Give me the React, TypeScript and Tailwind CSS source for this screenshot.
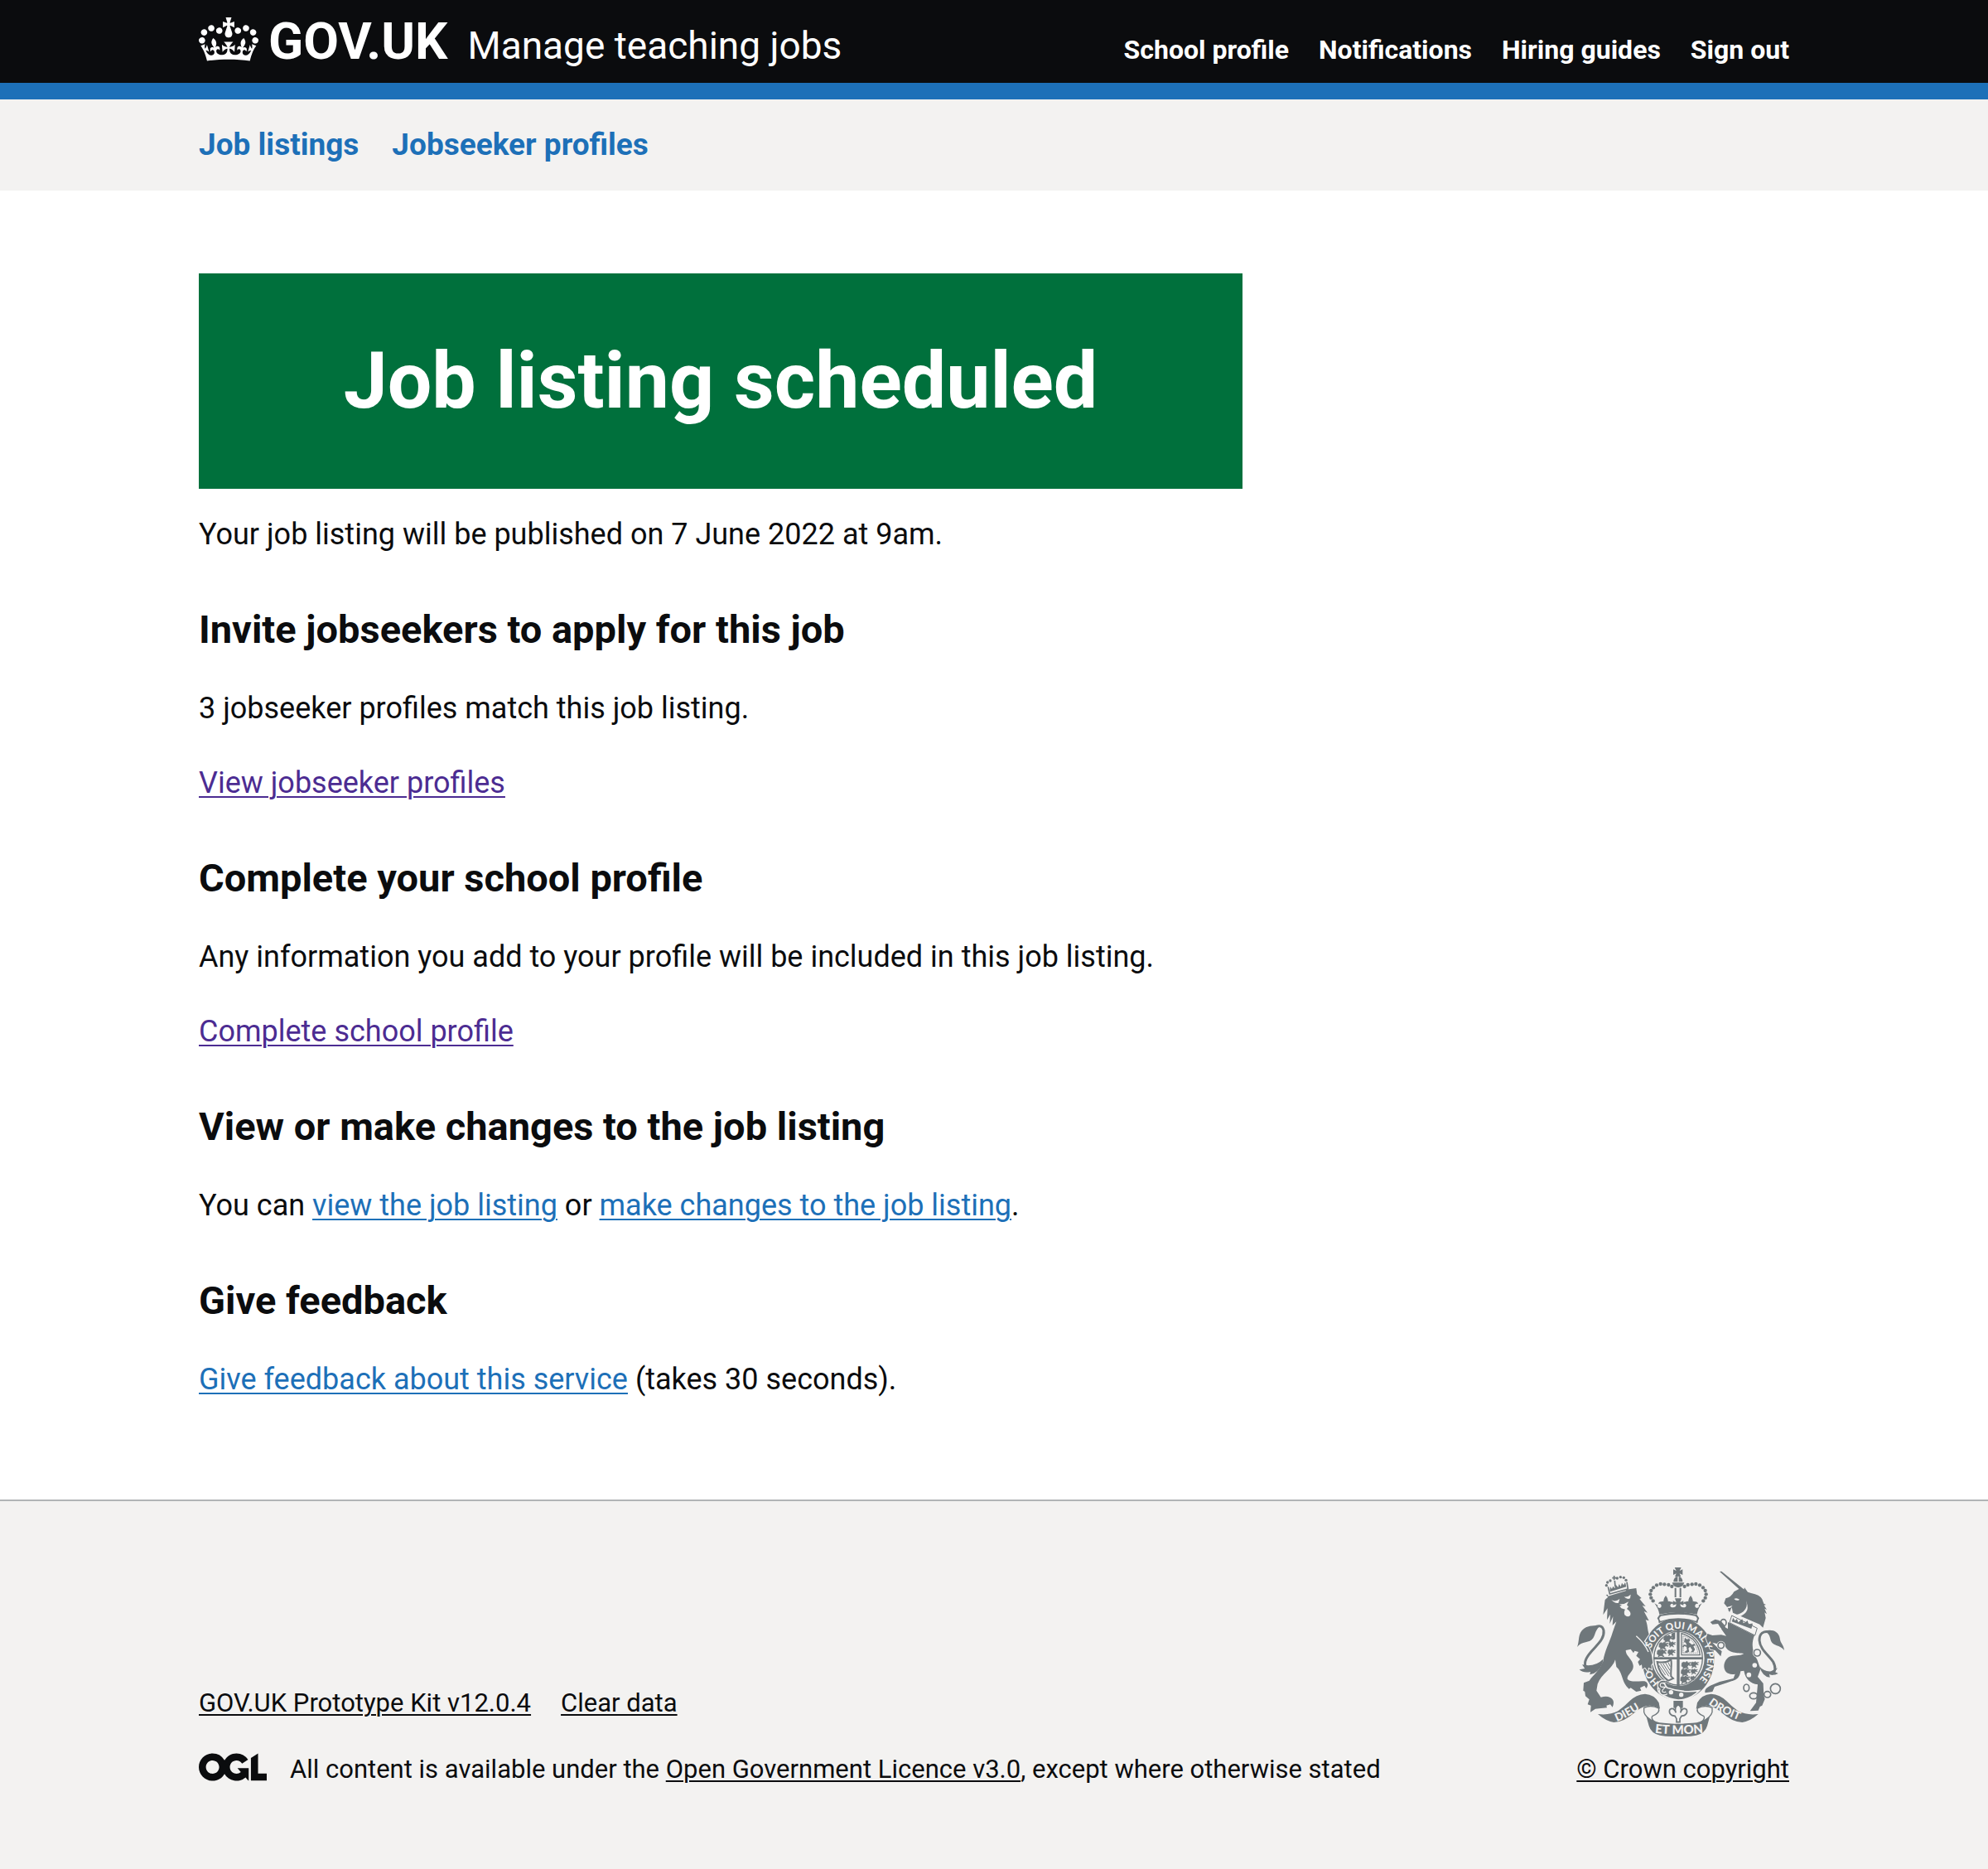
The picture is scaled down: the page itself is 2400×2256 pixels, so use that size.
import type { ReactNode } from "react";

const PAPER = "#f3f2f1";
const INK = "#6f777b";

function Crown() {
  return (
    <svg aria-hidden="true" viewBox="0 0 132 97" className="mt-px h-[53px] w-[72px] shrink-0 self-start" fill="currentColor">
      <path
        fillRule="evenodd"
        d="M25 30.2c3.5 1.5 7.7-.2 9.1-3.7 1.5-3.6-.2-7.8-3.9-9.2-3.6-1.4-7.6.3-9.1 3.9-1.4 3.5.3 7.5 3.9 9zM9 39.5c3.6 1.5 7.8-.2 9.2-3.7 1.5-3.6-.2-7.8-3.9-9.1-3.6-1.5-7.6.2-9.1 3.8-1.4 3.5.3 7.5 3.8 9zM4.4 57.2c3.5 1.5 7.7-.2 9.1-3.8 1.5-3.6-.2-7.7-3.9-9.1-3.5-1.5-7.6.3-9.1 3.8-1.4 3.5.3 7.6 3.9 9.1zm38.3-21.4c3.5 1.5 7.7-.2 9.1-3.8 1.5-3.6-.2-7.7-3.9-9.1-3.6-1.5-7.6.3-9.1 3.8-1.3 3.6.4 7.7 3.9 9.1zm64.4-5.6c-3.6 1.5-7.8-.2-9.1-3.7-1.5-3.6.2-7.8 3.8-9.2 3.6-1.4 7.7.3 9.2 3.9 1.3 3.5-.4 7.5-3.9 9zm15.9 9.3c-3.6 1.5-7.7-.2-9.1-3.7-1.5-3.6.2-7.8 3.7-9.1 3.6-1.5 7.7.2 9.2 3.8 1.5 3.5-.3 7.5-3.8 9zm4.7 17.7c-3.6 1.5-7.8-.2-9.2-3.8-1.5-3.6.2-7.7 3.9-9.1 3.6-1.5 7.7.3 9.2 3.8 1.3 3.5-.4 7.6-3.9 9.1zM89.3 35.8c-3.6 1.5-7.8-.2-9.2-3.8-1.4-3.6.2-7.7 3.9-9.1 3.6-1.5 7.7.3 9.2 3.8 1.4 3.6-.3 7.7-3.9 9.1zM69.7 17.7l8.9 4.7V9.3l-8.9 2.8c-.2-.3-.5-.6-.9-.9L72.4 0H59.6l3.5 11.2c-.3.3-.6.5-.9.9l-8.8-2.8v13.1l8.8-4.7c.3.3.6.7.9.9l-5 15.4v.1c-.2.8-.4 1.6-.4 2.4 0 4.1 3.1 7.5 7 8.1h.2c.3 0 .7.1 1 .1.4 0 .7 0 1-.1h.2c4-.6 7.1-4.1 7.1-8.1 0-.8-.1-1.7-.4-2.4V34l-5.1-15.4c.4-.2.7-.6 1-.9zM66 92.8c16.9 0 32.8 1.1 47.1 3.2 4-16.9 8.9-26.7 14-33.5l-9.6-3.4c1 4.9 1.1 7.2 0 10.2-1.5-1.4-3-4.3-4.2-8.7L108.6 76c2.8-2 5-3.2 7.5-3.3-4.4 9.4-10 11.9-13.6 11.2-4.3-.8-6.3-4.6-5.6-7.9 1-4.7 5.7-5.9 8-.5 4.3-8.7-3-11.4-7.6-8.8 7.1-7.2 7.9-13.5 2.1-21.1-8 6.1-8.1 12.3-4.5 20.8-4.7-5.4-12.1-2.5-9.5 6.2 3.4-5.2 7.9-2 7.2 3.1-.6 4.3-6.4 7.8-13.5 7.2-10.3-.9-10.9-8-11.2-13.8 2.5-.5 7.1 1.8 11 7.3L80.2 60c-4.1 4.4-8 5.3-12.3 5.4 1.4-4.4 8-11.6 8-11.6H55.5s6.4 7.2 7.9 11.6c-4.2-.1-8-1-12.3-5.4l1.4 16.4c3.9-5.5 8.5-7.7 10.9-7.3-.3 5.8-.9 12.8-11.1 13.8-7.2.6-12.9-2.9-13.5-7.2-.7-5 3.8-8.3 7.1-3.1 2.7-8.7-4.6-11.6-9.4-6.2 3.7-8.5 3.6-14.7-4.6-20.8-5.8 7.6-5 13.9 2.2 21.1-4.7-2.6-11.9.1-7.7 8.8 2.3-5.5 7.1-4.2 8.1.5.7 3.3-1.3 7.1-5.7 7.9-3.5.7-9-1.8-13.5-11.2 2.5.1 4.7 1.3 7.5 3.3l-4.7-15.4c-1.2 4.4-2.7 7.2-4.3 8.7-1.1-3-.9-5.3 0-10.2l-9.5 3.4c5 6.9 9.9 16.7 14 33.5 14.8-2.1 30.8-3.2 47.7-3.2z"
      />
    </svg>
  );
}

function OglLogo() {
  return (
    <svg aria-hidden="true" viewBox="0 0 483.2 195.7" className="h-[34px] w-[82px] shrink-0" fill="currentColor">
      <path d="M421.5 142.8V.1l-50.7 32.3v161.1h112.4v-50.7zm-122.3-9.6A47.12 47.12 0 0 1 221 97.8c0-26 21.1-47.1 47.1-47.1 16.7 0 31.4 8.7 39.7 21.8l42.7-27.2A97.63 97.63 0 0 0 268.1 0c-36.5 0-68.3 20.1-85.1 49.7A98 98 0 0 0 97.8 0C43.9 0 0 43.9 0 97.8s43.9 97.8 97.8 97.8c36.5 0 68.3-20.1 85.1-49.7a97.76 97.76 0 0 0 149.6 25.4l19.4 22.2h3v-87.8h-80l24.3 27.5zM97.8 145c-26 0-47.1-21.1-47.1-47.1s21.1-47.1 47.1-47.1 47.1 21.1 47.1 47.1S123.8 145 97.8 145" />
    </svg>
  );
}

const leftBeads = [[388, 127], [374, 126], [360, 130], [348, 139], [340, 150], [337, 163], [340, 176], [347, 187], [403, 129], [415, 135]];
const lionBeads = [[178, 131], [182, 120], [192, 114], [217, 105], [229, 101], [241, 103], [249, 112]];
const links = [[602, 266, 10, 12], [724, 375, 12, 12], [685, 502, 10, 13], [711, 531, 14, 11], [761, 526, 12, 11], [790, 505, 18, 18]];
const passant = "M0 4q6-8 14-3l6-5 4 6 10-2 3 4-8 3 6 4-2 5-8-3-3 5 5 6-3 4-7-5-7 1-3 5-5-1 3-8-6-4z";
const passants = [[385, 312, 1], [368, 338, 1], [404, 336, 0.7], [361, 364, 1], [400, 364, 0.8], [450, 408, 1], [484, 408, 0.8], [448, 434, 1], [484, 434, 0.7], [446, 460, 1], [482, 460, 0.6]];

function RoyalArms() {
  return (
    <svg aria-hidden="true" viewBox="72 66 750 612" className="mr-1.5 h-[204px] w-[250px]" fill={INK}>
      {/* garter ring */}
      <ellipse cx="438" cy="397" rx="131" ry="149" />
      <ellipse cx="438" cy="395" rx="95" ry="100" fill={PAPER} />
      <ellipse cx="438" cy="395" rx="88" ry="97" fill="none" stroke={INK} strokeWidth="4" />
      <path d="M433 292h10v208h-10zM350 391h177v8H350z" />
      {passants.map(([x, y, s]) => (
        <path key={`${x}-${y}`} d={passant} transform={`translate(${x} ${y}) scale(${s})`} stroke={PAPER} strokeWidth="1" />
      ))}
      <path d="M413 305l14-4v24l-9 4z" />
      <path d="M450 383V305q20 6 40 20 24 24 27 58z" fill="none" stroke={INK} strokeWidth="4" />
      <path d="M456 376V314q16 4 30 16 20 20 23 46z" fill="none" stroke={INK} strokeWidth="2" strokeDasharray="5 2" />
      <path d="M462 320l8 6 8-2 3 8-5 4 12 10 8-4 4 6-7 3 6 12-6 10h-10l6-8-8-12-6 6 3 12-10 4-8-2 10-8-2-12-8-2-4 6-3-6 8-6 8 3-4-10-6-1z" />
      <path d="M362 408c20 4 38 0 50-8 4 18-2 40 0 60l8 8-18 8c-20-12-36-38-40-68z" fill="none" stroke={INK} strokeWidth="6" />
      <path d="M374 414l30 46M383 414l24 38M392 411l16 28M401 409l8 16M368 420l24 36" stroke={INK} strokeWidth="3" />
      {/* buckle and strap */}
      <path d="M372 484q16-4 20 10l6 8q58 20 116 10-32 34-76 34-36-2-66-24-16-16 0-38z" stroke={PAPER} strokeWidth="5" />
      <path d="M392 480q-24-4-24 14 2 10 12 10-8 8-2 16 8 6 18 0" fill="none" stroke={PAPER} strokeWidth="13" />
      <path d="M392 480q-24-4-24 14 2 10 12 10-8 8-2 16 8 6 18 0" fill="none" stroke={INK} strokeWidth="6" />
      <circle cx="412" cy="518" r="8" fill={PAPER} />
      <circle cx="449" cy="527" r="8" fill={PAPER} />
      {/* imperial crown */}
      <path d="M425 66h24l-6 12 11-5v20l-11-5 5 12h-22l5-12-11 5V73l11 5z" />
      <path d="M421 118q0-18 17-20 16 2 16 20zM416 121h44q-4 16-22 18-18-2-22-18z" />
      <path d="M436 98h4v20h-4z" fill={PAPER} />
      <path d="M425 140h6v34h-6zM443 140h6v34h-6z" />
      {leftBeads.map(([x, y]) => (
        <g key={`${x}-${y}`}>
          <circle cx={x} cy={y} r="6.5" />
          <circle cx={876 - x} cy={y} r="6.5" />
        </g>
      ))}
      <path d="M352 196l12 7q-4 8 6 10 10-2 6-12-4-6-10-3 2-10 13-8 2-4 6 0-2-10 8-22 10 12 8 22 4-4 8 0 12 0 10 8-8-2-10 5 0 8 10 8 12 0 12-12l-12 4v-16l12 5-5-14h24l-5 14 12-5v16l-12-4q0 12 12 12 10 0 10-8-2-7-10-5-2-8 10-8 4-4 8 0-2-10 8-22 10 12 8 22 4-4 6 0 11-2 13 8-6-3-10 3-4 10 6 12 10-2 6-10l12-7q-14 18-18 40-64-14-136 0-4-22-18-40z" />
      <path d="M370 238q68-22 136 0l8 12q-6 10-6 18-70-32-140 0 0-10-6-18z" />
      <path d="M376 242q62-12 124 0 12 8 2 18-64-20-128 0-10-10 2-18z" fill={PAPER} />
      {/* lion */}
      <path
        d="M173 183l11-10-8-8 24-2 50-17 36-5 3 22 16 14-7 3 22 27-12-3 19 26-13-5 18 34-12-3c8 18 6 34 12 52l-18 26q20 18 28 50l4 28-6 8 2 14-12-6-2 14-10-14-10 6-2-16-8 4-6-14 8-10-14-12 8-14-14-4-4 8-10-14-18 4c0 20 20 28 26 50 8 26-22 36-20 54 12 14 40 6 62 8 14 4 14 18 6 26l-6-10-16 8 4 10-18 4-20-14-6 4c-24-20-22-48-38-72l-8-8-4-26c-10 34-50 50-64 88l-4 24 16 24q30-8 42 8 8 10 0 28l-8-10-14 4 2 8-22 2-20 2-18 12 2-24-12-4 6-18-14-12-2-16-6-4 2-28 20-8c14-20 40-40 50-70 6-40 24-70 34-104l14-40-14 14 2-32-12 26 2-34-12 20 2-42-16 24 6-48z"
        stroke={PAPER}
        strokeWidth="6"
        paintOrder="stroke"
      />
      <path d="M182 160l70-19-4 10-64 19z" fill={PAPER} />
      <path d="M196 184q16 8 30-4l-4 14q-12 4-26-10zM242 172q14 2 24-8l-2 14q-12 6-22-6z" fill={PAPER} />
      <path d="M224 198q16 4 34-8l-6 12 6 6-6 8q18 12 12 24-10 8-20-2-4-12 2-20l-14-4-6-8 8-2z" fill={PAPER} />
      <path d="M286 314q30 26 44 58" fill="none" stroke={PAPER} strokeWidth="4" />
      <path d="M184 136l6 26 66-18-4-25M206 96v16M199 104h15M208 114l2 22" fill="none" stroke={INK} strokeWidth="5" />
      <path d="M190 150l2-14 6 8 4-10 6 8 4-14 8 10 4-12 6 10 4-14 6 8 6-10 4 16-58 18z" />
      {lionBeads.map(([x, y]) => <circle key={x} cx={x} cy={y} r="5" />)}
      <path d="M132 284q30-16 36 10c4 30-22 50-44 76-26 30-28 44-18 66" fill="none" stroke={INK} strokeWidth="9" />
      <path d="M152 280c-24-8-56 0-68 22-8 16-4 32-12 52 16-22 46-12 58-32 8-12 6-24 22-42zM166 398q-30 30-76 20l10 14-20 4q16 14 40 8l-2 10q30-4 46-40z" />
      {/* unicorn */}
      <path d="M588 81l7-1 82 66-4 10 5-17 12 16 12 4q32 6 40 22l6 16 8 4-7 2 10 16-8-4 8 20-8-6 4 20-10 35-12-12-97-42-4-20-8 18-6-10-4-10-10-12 6-18q20-4 30-24l18-10z" />
      <path d="M640 180q10-6 20 2-8 8-20-2zM603 214l18-6 14-4-8 8-10 2 4 6zM684 186q8 24-10 40-18 14-40 12l20 8q28-8 34-26 4-12-4-34z" fill={PAPER} />
      <path
        d="M618 264l96 48c-12 30-8 60 10 88l12 34-10 28 20 24 2 44 4 12-10 24-8 4-6 14-30 2 22-30 6-66c-26-4-44-18-50-50l-12 2c-6 36-26 32-50 42l-44 14-8 18-26 4q-6-14 18-26l34-14 50-12 6-16c-50 8-48-46-22-62 14-8 40-2 54-12-24-4-56 0-68-28l-14-4-32-8 12 12 22 20-4 18-20-22-18-4-16-40 6-16 18 6 32-2 18 4-16-22-14-22-20 2-8-8 18-10q26 2 38 30l8 4z"
        stroke={PAPER}
        strokeWidth="5"
        paintOrder="stroke"
      />
      <path d="M632 240l92 46-8 26-92-46z" fill={PAPER} stroke={INK} strokeWidth="3" />
      <path d="M632 262l5-14 7 11 7-7 4 13 9-7 6-5 4 15 9-5 6-5 4 15 9-4 6 0-5 19z" />
      <g fill={PAPER} stroke={PAPER} strokeWidth="5">
        <circle cx="586" cy="292" r="6" />
        <circle cx="715" cy="420" r="6" />
        <circle cx="694" cy="455" r="6" />
        <circle cx="593" cy="348" r="13" />
        <circle cx="724" cy="375" r="14" />
      </g>
      <circle cx="593" cy="348" r="11" fill="none" stroke={INK} strokeWidth="5" />
      <g fill="none" stroke={INK} strokeWidth="5">
        {links.map(([x, y, rx, ry]) => <ellipse key={x} cx={x} cy={y} rx={rx} ry={ry} />)}
      </g>
      <path d="M772 300q-40-8-40 30c2 32 34 54 50 78 10 20 8 36-6 44" fill="none" stroke={INK} strokeWidth="9" />
      <path d="M752 296c24-8 50 0 54 26 2 20 14 24 16 44-16-22-40-14-48-34-4-14-4-24-22-36zM732 424q16 20 42 18l24-12-10 14 12 6q-20 10-32 2l2 12q-26 0-38-40z" />
      {/* ribbon */}
      <g id="ribbon-half">
        <path d="M147 597Q190 602 220 586Q245 568 262 550Q285 526 318 524Q352 526 368 556L372 578Q345 562 322 568Q300 574 280 592Q240 627 205 627Q175 622 147 597Z" />
        <path d="M320 596Q345 622 370 628Q438 634 439 632V678Q400 679 372 674Q340 668 332 640Z" />
        <path d="M314 574Q340 562 367 576Q374 592 345 604Q338 610 350 624Q318 608 314 590Z" fill={PAPER} stroke={INK} strokeWidth="4" />
      </g>
      <use href="#ribbon-half" transform="matrix(-1 0 0 1 875 0)" />
      <path d="M421 549h34v26h-34z" />
      <path d="M438 562q16 12 8 30 8-22 22-12 6 14-8 22l-10 2-6 10v12h-12v-12l-6-10-10-2q-14-8-8-22 14-10 22 12-8-18 8-30z" fill={PAPER} stroke={INK} strokeWidth="5" />
      {/* mottoes */}
      <g fill={PAPER} fontFamily="Lato, sans-serif" fontWeight="900">
        <path id="motto" d="M370 482A105 109 0 0 1 333 397A105 109 0 0 1 543 397A105 109 0 0 1 438 506" fill="none" />
        <path id="dieu" d="M216 624Q262 606 328 560" fill="none" />
        <path id="droit" d="M547 560Q602 602 690 630" fill="none" />
        <path id="etmon" d="M353 665Q438 675 530 665" fill="none" />
        <text fontSize="35">
          <textPath href="#motto">HO<tspan dx="78">SOIT QUI MAL Y PENSE</tspan></textPath>
        </text>
        <text fontSize="40"><textPath href="#dieu">DIEU</textPath></text>
        <text fontSize="40"><textPath href="#droit">DROIT</textPath></text>
        <text fontSize="45"><textPath href="#etmon">ET MON</textPath></text>
      </g>
    </svg>
  );
}

function NavLink({ children }: { children: ReactNode }) {
  return <a href="#" className="hover:underline">{children}</a>;
}

function BodyLink({ children, visited = false }: { children: ReactNode; visited?: boolean }) {
  return (
    <a href="#" className={`underline decoration-2 underline-offset-4 ${visited ? "text-[#4c2c92]" : "text-[#1d70b8]"}`}>
      {children}
    </a>
  );
}

function FooterLink({ children }: { children: ReactNode }) {
  return <a href="#" className="underline decoration-2 underline-offset-[3px]">{children}</a>;
}

function Section({ title, children }: { title: string; children: ReactNode }) {
  return (
    <section className="flex flex-col gap-10 pt-5">
      <h2 className="text-[47px] leading-[60px] font-bold">{title}</h2>
      {children}
    </section>
  );
}

const container = "mx-auto w-full max-w-[1920px]";

export default function App() {
  return (
    <div className="bg-white font-[Roboto,sans-serif] text-[#0b0c0e]">
      <header className="border-b-20 border-[#1d70b8] bg-[#0b0c0e] py-5 text-white">
        <div className={`${container} flex items-baseline justify-between`}>
          <div className="flex items-baseline">
            <a href="#" className="flex items-baseline gap-3">
              <Crown />
              <span className="text-[62px] leading-[60px] font-bold">GOV.UK</span>
            </a>
            <a href="#" className="ml-6 text-[46px] leading-10">Manage teaching jobs</a>
          </div>
          <nav aria-label="Account" className="flex gap-9 text-[32px] leading-8 font-bold">
            <NavLink>School profile</NavLink>
            <NavLink>Notifications</NavLink>
            <NavLink>Hiring guides</NavLink>
            <NavLink>Sign out</NavLink>
          </nav>
        </div>
      </header>

      <div className="bg-[#f3f2f1] py-[30px]">
        <nav aria-label="Primary" className={`${container} flex gap-10 text-[37px] leading-[50px] font-bold text-[#1d70b8]`}>
          <NavLink>Job listings</NavLink>
          <NavLink>Jobseeker profiles</NavLink>
        </nav>
      </div>

      <main className={`${container} grid grid-cols-3 gap-[60px] pt-[100px] pb-20`}>
        <div className="col-span-2 flex flex-col gap-10 pb-10 text-[36px] leading-[50px]">
          <div className="-mb-2.5 bg-[#00703c] p-20 text-center text-white">
            <h1 className="text-[95px] leading-[100px] font-bold">Job listing scheduled</h1>
          </div>
          <p>Your job listing will be published on 7 June 2022 at 9am.</p>
          <Section title="Invite jobseekers to apply for this job">
            <p>3 jobseeker profiles match this job listing.</p>
            <p><BodyLink visited>View jobseeker profiles</BodyLink></p>
          </Section>
          <Section title="Complete your school profile">
            <p>Any information you add to your profile will be included in this job listing.</p>
            <p><BodyLink visited>Complete school profile</BodyLink></p>
          </Section>
          <Section title="View or make changes to the job listing">
            <p>
              You can <BodyLink>view the job listing</BodyLink> or <BodyLink>make changes to the job listing</BodyLink>.
            </p>
          </Section>
          <Section title="Give feedback">
            <p><BodyLink>Give feedback about this service</BodyLink> (takes 30 seconds).</p>
          </Section>
        </div>
      </main>

      <footer className="border-t-2 border-[#b1b4b6] bg-[#f3f2f1] pt-20 pb-[100px] text-[31px] leading-10">
        <div className={`${container} flex items-end justify-between`}>
          <div className="flex flex-col gap-10">
            <ul className="flex gap-9">
              <li><FooterLink>GOV.UK Prototype Kit v12.0.4</FooterLink></li>
              <li><FooterLink>Clear data</FooterLink></li>
            </ul>
            <div className="flex items-start gap-7">
              <OglLogo />
              <p>
                All content is available under the <FooterLink>Open Government Licence v3.0</FooterLink>, except where otherwise stated
              </p>
            </div>
          </div>
          <a href="#" className="flex flex-col items-end gap-5 underline decoration-2 underline-offset-[3px]">
            <RoyalArms />
            <span>© Crown copyright</span>
          </a>
        </div>
      </footer>
    </div>
  );
}
